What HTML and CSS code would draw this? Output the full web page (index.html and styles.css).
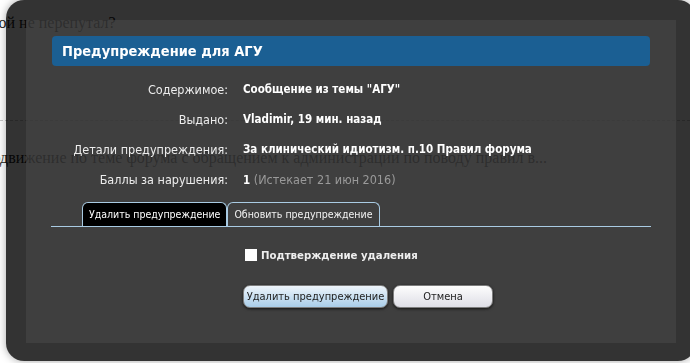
FILE: index.html
```html
<!DOCTYPE html>
<html lang="ru">
<head>
    <meta charset="UTF-8">
    <title>Предупреждение для АГУ</title>
    <link rel="stylesheet" href="styles.css">
</head>
<body>
    <div class="page">
        <p class="page-text first">свой не перепутал?</p>
        <hr class="page-rule">
        <p class="page-text second">Продвижение по теме форума с обращением к администрации по поводу правил в...</p>
    </div>

    <div class="overlay">
        <div class="overlay-inner">
            <h2 class="dialog-title">Предупреждение для АГУ</h2>

            <dl class="info">
                <dt>Содержимое:</dt>
                <dd>Сообщение из темы "АГУ"</dd>
                <dt>Выдано:</dt>
                <dd>Vladimir, 19 мин. назад</dd>
                <dt>Детали предупреждения:</dt>
                <dd>За клинический идиотизм. п.10 Правил форума</dd>
                <dt>Баллы за нарушения:</dt>
                <dd>1 <span class="muted">(Истекает 21 июн 2016)</span></dd>
            </dl>

            <ul class="tabs">
                <li class="tab active">Удалить предупреждение</li>
                <li class="tab">Обновить предупреждение</li>
            </ul>

            <form class="delete-form">
                <label class="confirm">
                    <input type="checkbox" class="confirm-box">
                    Подтверждение удаления
                </label>
                <div class="buttons">
                    <button type="submit" class="btn btn-primary">Удалить предупреждение</button>
                    <button type="button" class="btn">Отмена</button>
                </div>
            </form>
        </div>
    </div>
</body>
</html>
```

FILE: styles.css
```css
* {
    margin: 0;
    padding: 0;
    box-sizing: border-box;
}

body {
    background: #fff;
    font-family: 'DejaVu Sans Condensed', 'DejaVu Sans', sans-serif;
    overflow: hidden;
}

/* page behind the overlay */
.page {
    padding-top: 14px;
}

.page-text {
    font-family: 'Liberation Serif', serif;
    font-size: 16px;
    line-height: 18px;
    color: #222;
    white-space: nowrap;
}

.page-text.first {
    text-indent: -16px;
}

.page-text.second {
    text-indent: -27px;
}

.page-rule {
    border: none;
    border-top: 1px dashed #c8c8c8;
    margin: 88px 0 28px;
}

/* overlay */
.overlay {
    position: fixed;
    left: 6px;
    top: 0;
    width: 690px;
    height: 361px;
    padding: 20px 20px 18px;
    border-radius: 18px;
    background: rgba(0, 0, 0, 0.8);
    box-shadow: 0 0 9px rgba(0, 0, 0, 0.35);
}

.overlay-inner {
    height: 100%;
    padding: 16px 26px;
    background: rgba(72, 72, 72, 0.6);
}

.dialog-title {
    height: 30px;
    line-height: 30px;
    padding-left: 10px;
    background: #1b5f93;
    border-radius: 4px;
    color: #fff;
    font-size: 14.5px;
    font-weight: bold;
}

.info {
    display: grid;
    grid-template-columns: 176px 1fr;
    column-gap: 15px;
    grid-auto-rows: 30px;
    align-items: center;
    margin-top: 8px;
    font-size: 12.5px;
}

.info dt {
    text-align: right;
    color: #ededed;
}

.info dd {
    color: #fff;
    font-size: 11.5px;
    font-weight: bold;
}

.info .muted {
    color: #9a9a9a;
    font-weight: normal;
    font-size: 12.5px;
}

.tabs {
    display: flex;
    list-style: none;
    margin: 8px -1px 0;
    padding-left: 31px;
    border-bottom: 1px solid #a9cbe3;
}

.tab {
    height: 24px;
    line-height: 23px;
    padding: 0 6px;
    border: 1px solid #a9cbe3;
    border-bottom: none;
    border-radius: 6px 6px 0 0;
    color: #f2f2f2;
    font-size: 10.5px;
}

.tab.active {
    background: #000;
    color: #fff;
}

.delete-form {
    padding-left: 191px;
    margin-top: 20px;
}

.confirm {
    display: flex;
    align-items: center;
    gap: 4px;
    height: 16px;
    color: #eee;
    font-size: 11.3px;
    font-weight: bold;
}

.confirm-box {
    appearance: none;
    width: 12px;
    height: 12px;
    margin-left: 2px;
    background: #fff;
    border: none;
}

.buttons {
    display: flex;
    gap: 5px;
    margin-top: 22px;
}

.btn {
    height: 23px;
    width: 100px;
    border: 1px solid #7d7d7d;
    border-radius: 7px;
    background: linear-gradient(#fdfdfd, #dedee6);
    box-shadow: 0 1px 3px rgba(0, 0, 0, 0.7);
    color: #222;
    font-family: 'DejaVu Sans Condensed', 'DejaVu Sans', sans-serif;
    font-size: 11px;
}

.btn-primary {
    width: 145px;
    background: linear-gradient(#eef5fb, #a9cde9);
}
```
